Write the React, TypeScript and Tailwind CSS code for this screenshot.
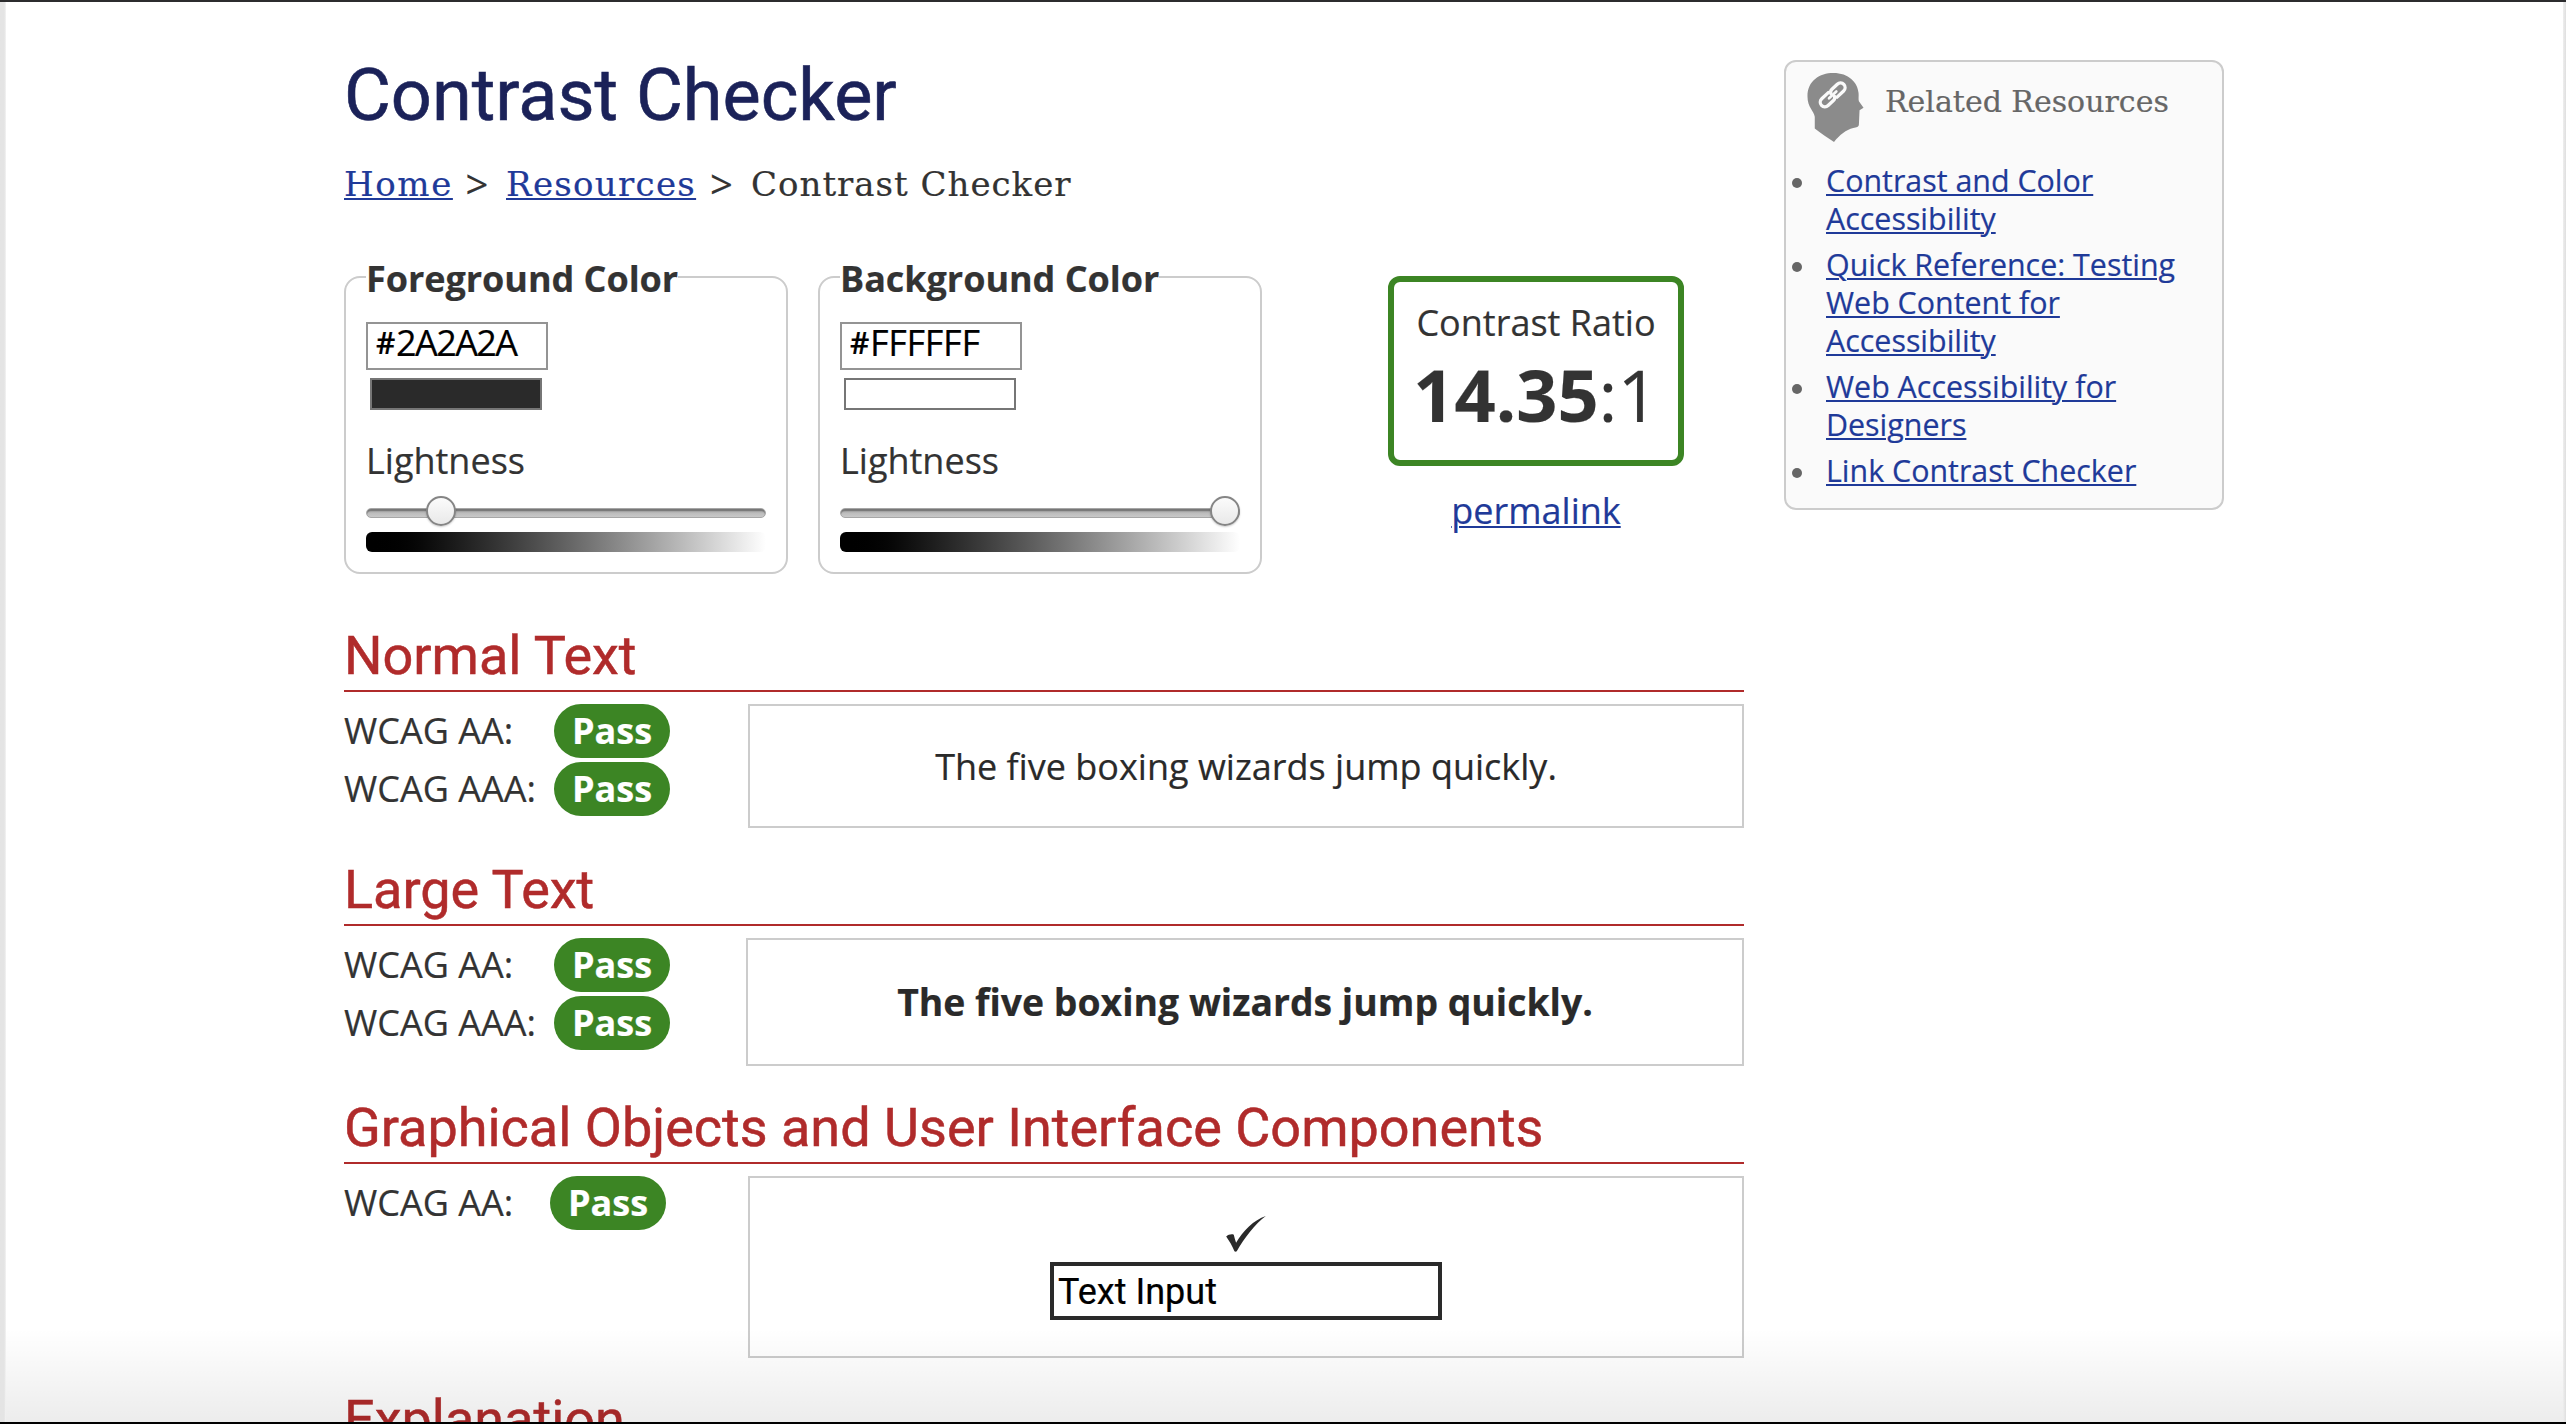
import type { ReactNode } from "react";

const linkClass =
  "text-[#1f3a99] underline decoration-2 underline-offset-[2px] [text-decoration-skip-ink:auto]";

type ColorPanelProps = {
  legend: string;
  hex: string;
  tracking: string;
  swatch: string;
  thumb: string;
};

function ColorPanel({ legend, hex, tracking, swatch, thumb }: ColorPanelProps) {
  return (
    <div className="relative h-[298px] w-[444px] rounded-[16px] border-2 border-[#ccc] px-5 pt-11">
      <div className="absolute -top-[13px] left-5 bg-white text-[36px] leading-[28px] font-bold tracking-[-0.05px]">
        {legend}
      </div>
      <div className="flex h-12 w-[182px] border-2 border-[#949494] bg-white pl-2 text-[36px] leading-[38px] text-black">
        <span className="w-[20px] text-[30px] font-semibold">#</span>
        <span className={tracking}>{hex}</span>
      </div>
      <div className={`mt-2 ml-1 h-8 w-[172px] border-2 border-[#767676] ${swatch}`} />
      <div className="mt-[27px] text-[36px] leading-[48px]">Lightness</div>
      <div className="relative mt-[23px] h-[10px] w-[400px] rounded-[5px] border border-[#a6a6a6] bg-gradient-to-b from-[#8a8a8a] via-[#bcbcbc] to-[#c8c8c8] shadow-[inset_0_2px_1px_#777]">
        <div
          className={`absolute -top-[13px] size-[30px] rounded-full border-2 border-[#858585] bg-gradient-to-b from-[#fbfbfb] to-[#e9e9e9] shadow-[0_1px_2px_rgba(0,0,0,0.2)] ${thumb}`}
        />
      </div>
      <div className="mt-[14px] h-5 w-[400px] rounded-[6px] bg-gradient-to-r from-black to-white" />
    </div>
  );
}

function SectionHeading({ children }: { children: ReactNode }) {
  return (
    <h2 className="h-[68px] border-b-2 border-[#b02b2b] font-['Roboto',sans-serif] text-[54px] leading-[63px] whitespace-nowrap text-[#b02b2b] [-webkit-text-stroke:0.5px_#b02b2b]">
      {children}
    </h2>
  );
}

function Level({ label, width }: { label: string; width: string }) {
  return (
    <div className="flex h-[54px] text-[36px] leading-[54px]">
      <span className={width}>{label}</span>
      <span className="w-[116px] rounded-full bg-[#3c8524] text-center font-bold text-white">Pass</span>
    </div>
  );
}

function HeadIcon() {
  return (
    <svg viewBox="51 38 171 208" className="mt-[11px] ml-[21px] h-[69px] w-[57px]">
      <path
        d="M52 108C52 62 88 38 130 38C176 38 203 66 206 98C207 108 205 116 207 123L221 143L209 150L207 194C207 200 200 202 190 204C168 210 150 224 132 246C113 232 92 220 74 205L74 170C72 152 52 142 52 108Z"
        fill="#8b8b8b"
      />
      <g transform="translate(128 104) rotate(-43)" fill="none" stroke="#fafafa" strokeWidth="10" strokeLinecap="round">
        <path d="M-5 -14H-32A14 14 0 0 0 -32 14H-10A12 12 0 0 0 1 7" />
        <path d="M5 14H32A14 14 0 0 0 32 -14H10A12 12 0 0 0 -1 -7" />
        <path d="M-15 0H15" strokeWidth="8" />
      </g>
    </svg>
  );
}

const resources = [
  ["Contrast and Color", "Accessibility"],
  ["Quick Reference: Testing", "Web Content for", "Accessibility"],
  ["Web Accessibility for", "Designers"],
  ["Link Contrast Checker"],
];

export default function App() {
  return (
    <div className="relative h-[1424px] w-[2566px] overflow-hidden bg-white font-['Open_Sans','Noto_Sans',sans-serif] text-[#333] [-webkit-text-stroke:0.2px]">
      <div className="flex items-start pl-[344px]">
        <main className="w-[1400px] pt-[54px]">
          <h1 className="font-['Roboto',sans-serif] text-[72px] leading-[84px] text-[#1b2259] [-webkit-text-stroke:0.6px_#1b2259]">
            Contrast Checker
          </h1>
          <nav className="mt-[19px] flex h-[54px] font-['DejaVu_Serif',serif] text-[34px] leading-[54px] tracking-[1.3px] whitespace-nowrap">
            <a className={`w-[109px] tracking-[1.6px] ${linkClass}`}>Home</a>
            <span className="w-[53px] pr-1 text-center font-['Open_Sans',sans-serif] text-[40px]">&gt;</span>
            <a className={`w-[191px] ${linkClass}`}>Resources</a>
            <span className="w-[54px] pr-1 text-center font-['Open_Sans',sans-serif] text-[40px]">&gt;</span>
            <span className="tracking-[1px]">Contrast Checker</span>
          </nav>

          <div className="mt-[65px] flex h-[298px] items-start">
            <ColorPanel legend="Foreground Color" hex="2A2A2A" tracking="tracking-[-1.6px]" swatch="bg-[#2a2a2a]" thumb="left-[59px]" />
            <div className="w-[30px]" />
            <ColorPanel legend="Background Color" hex="FFFFFF" tracking="tracking-[-0.3px]" swatch="bg-white" thumb="left-[369px]" />
            <div className="ml-[126px] w-[296px] text-center">
              <div className="h-[190px] rounded-[12px] border-6 border-[#3c8524] pt-[17px]">
                <div className="text-[36px] leading-[48px]">Contrast Ratio</div>
                <div className="mt-[5px] text-[72px] leading-[84px]">
                  <b>14.35</b>:1
                </div>
              </div>
              <div className="mt-[21px] text-[36px] leading-[48px]">
                <a className={linkClass}>permalink</a>
              </div>
            </div>
          </div>

          <section className="mt-[50px]">
            <SectionHeading>Normal Text</SectionHeading>
            <div className="mt-3 flex justify-between">
              <div className="flex flex-col gap-1">
                <Level label="WCAG AA:" width="w-[210px]" />
                <Level label="WCAG AAA:" width="w-[210px]" />
              </div>
              <div className="flex h-[124px] w-[996px] items-center justify-center border-2 border-[#ccc] pt-[2px] text-[36px] leading-[48px] text-[#2a2a2a]">
                The five boxing wizards jump quickly.
              </div>
            </div>
          </section>

          <section className="mt-[30px]">
            <SectionHeading>Large Text</SectionHeading>
            <div className="mt-3 flex justify-between">
              <div className="flex flex-col gap-1">
                <Level label="WCAG AA:" width="w-[210px]" />
                <Level label="WCAG AAA:" width="w-[210px]" />
              </div>
              <div className="flex h-[128px] w-[998px] items-center justify-center border-2 border-[#ccc] text-[37.33px] leading-[50px] font-bold text-[#2a2a2a]">
                The five boxing wizards jump quickly.
              </div>
            </div>
          </section>

          <section className="mt-[30px]">
            <SectionHeading>Graphical Objects and User Interface Components</SectionHeading>
            <div className="mt-3 flex justify-between">
              <Level label="WCAG AA:" width="w-[206px]" />
              <div className="flex h-[182px] w-[996px] flex-col items-center border-2 border-[#ccc] pt-[38px]">
                <svg viewBox="138 77 120 109" className="h-[36px] w-[40px]" fill="#2a2a2a">
                  <path d="M138 139C144 133 156 131 161 134C163 142 165 150 168 158C188 124 222 88 258 77C225 102 193 143 170 184C168 186 165 186 163 184C157 168 147 152 138 139Z" />
                </svg>
                <div className="mt-[10px] h-[58px] w-[392px] border-4 border-[#2a2a2a] bg-white pl-1 font-['Roboto',sans-serif] text-[36px] leading-[52px] text-black">
                  Text Input
                </div>
              </div>
            </div>
          </section>

          <section className="mt-[30px]">
            <SectionHeading>Explanation</SectionHeading>
          </section>
        </main>

        <aside className="mt-[60px] ml-10 h-[450px] w-[440px] rounded-[12px] border-2 border-[#ccc] bg-[#fafafa]">
          <div className="flex h-[100px] items-start">
            <HeadIcon />
            <h2 className="mt-5 ml-[21px] font-['DejaVu_Serif',serif] text-[30px] leading-[40px] text-[#666]">
              Related Resources
            </h2>
          </div>
          <ul className="flex flex-col gap-2 text-[30.4px] leading-[38px] whitespace-nowrap">
            {resources.map((lines) => (
              <li key={lines[0]} className="flex">
                <span className="mt-4 mr-[24px] ml-[6px] size-[10px] rounded-full bg-[#666]" />
                <a className={linkClass}>
                  {lines.map((line) => (
                    <span key={line} className="block">
                      {line}
                    </span>
                  ))}
                </a>
              </li>
            ))}
          </ul>
        </aside>
      </div>

      <div className="absolute inset-x-0 bottom-0 h-[96px] bg-gradient-to-b from-transparent to-black/[0.075]" />
      <div className="absolute inset-y-0 left-0 w-[6px] bg-gradient-to-r from-[#e4e4e4] from-70% to-[#f4f4f4]" />
      <div className="absolute inset-y-0 right-0 w-[3px] bg-gradient-to-r from-[#eee] to-[#dfdfdf]" />
      <div className="absolute inset-x-0 top-0 h-[2px] bg-[#2c2c2e]" />
      <div className="absolute inset-x-0 bottom-0 h-[2px] bg-black" />
    </div>
  );
}
